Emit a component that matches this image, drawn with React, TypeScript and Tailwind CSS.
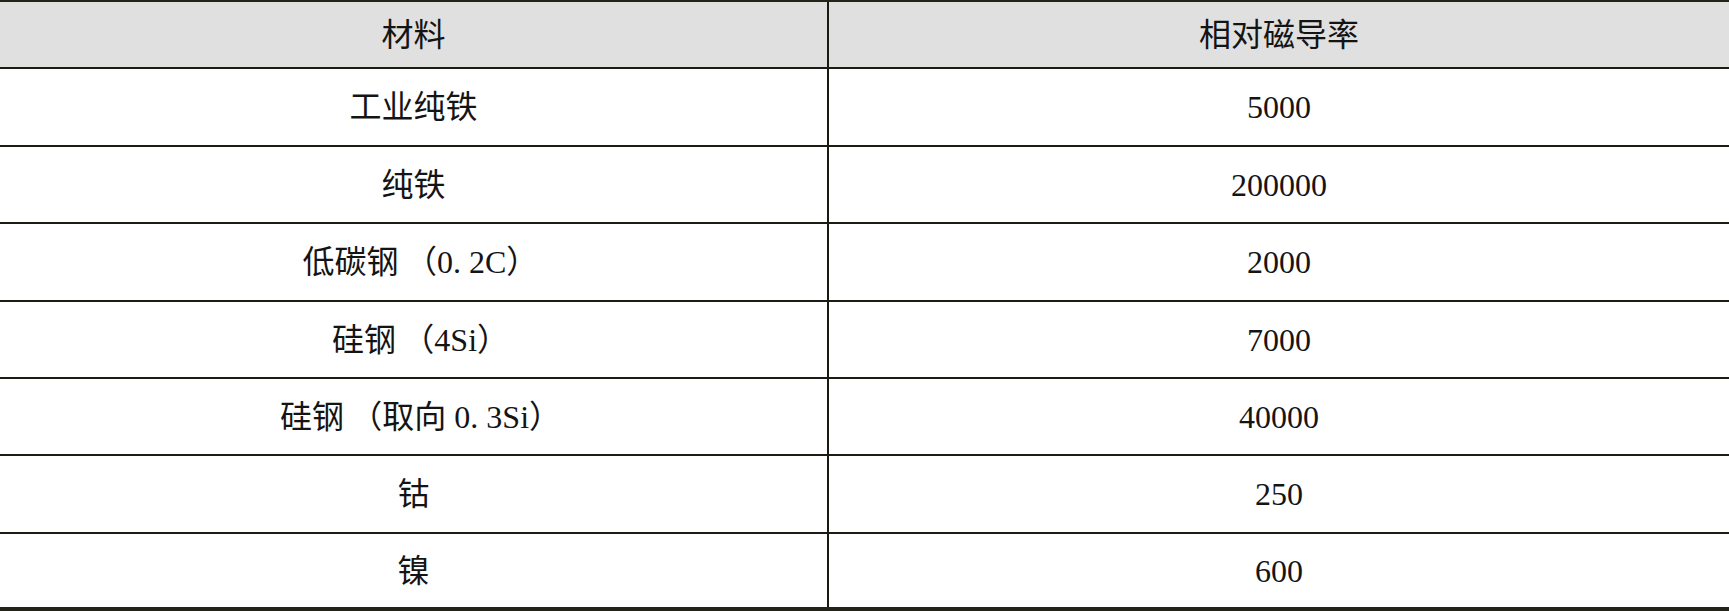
import React from 'react';

const rows = [
  { name: '工业纯铁', value: '5000', h: 'h-[76px]', paren: false },
  { name: '纯铁', value: '200000', h: 'h-[75px]', paren: false },
  { name: '低碳钢\u2009（0. 2C）', value: '2000', h: 'h-[76px]', paren: true },
  { name: '硅钢\u2009（4Si）', value: '7000', h: 'h-[75px]', paren: true },
  { name: '硅钢\u2009（取向 0. 3Si）', value: '40000', h: 'h-[75px]', paren: true },
  { name: '钴', value: '250', h: 'h-[76px]', paren: false },
  { name: '镍', value: '600', h: 'h-[73px]', paren: false },
];

export default function App() {
  return (
    <div
      className="w-[1729px] h-[611px] bg-white border-t-2 border-b-4 border-[#23231a] text-[32px] text-[#141414] flex flex-col"
      style={{ fontFamily: '"Liberation Serif", "Noto Sans CJK SC", serif' }}
    >
      {/* 表头 */}
      <div className="flex h-[65px] bg-[#e0e0e0]">
        <div className="w-[829px] border-r-2 border-[#1a1a14] flex items-center justify-center">材料</div>
        <div className="flex-1 flex items-center justify-center">相对磁导率</div>
      </div>

      {rows.map((row, i) => (
        <div key={i} className={`flex border-t-2 border-[#1c1c14] box-content ${row.h}`}>
          <div className={`w-[829px] border-r-2 border-[#1a1a14] flex items-center justify-center ${row.paren ? 'pl-[14px]' : ''}`}>
            {row.name}
          </div>
          <div className="flex-1 flex items-center justify-center">{row.value}</div>
        </div>
      ))}
    </div>
  );
}
